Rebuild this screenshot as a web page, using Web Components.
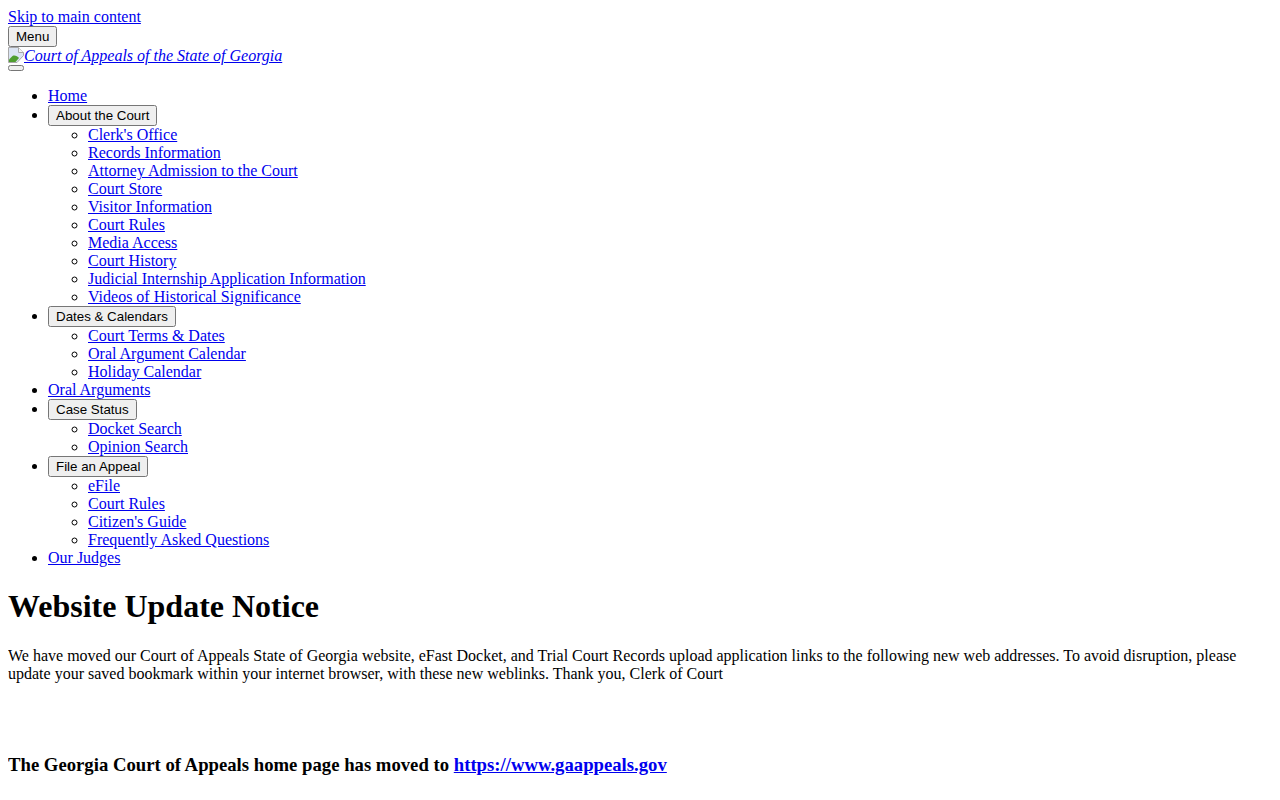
<!DOCTYPE html>
<html lang="en">
<head>
<meta charset="utf-8">
<title>Court of Appeals of the State of Georgia</title>
<style>
    body {
        font-family: "Liberation Serif", serif;
        font-size: 16px;
    }
</style>
</head>
<body>
<site-header></site-header>
<site-nav></site-nav>
<update-notice></update-notice>

<script>
const linkStyles = `
    a { color: #0000ee; }
    button {
        font-family: "Liberation Sans", sans-serif;
        font-size: 13.3333px;
    }
`;

class SiteHeader extends HTMLElement {
    constructor() {
        super();
        this.attachShadow({ mode: 'open' });
    }

    connectedCallback() {
        this.shadowRoot.innerHTML = `
            <style>
                :host { display: block; }
                ${linkStyles}
                .logo { font-style: italic; }
                .logo svg { vertical-align: -2px; }
                .toggle { display: block; }
            </style>
            <div><a href="#main">Skip to main content</a></div>
            <button>Menu</button>
            <div class="logo"><a href="#"><svg width="16" height="16" viewBox="0 0 16 16"><path d="M.5 15.5V.5h10l5 5v3L9 15.5z" fill="#dbe4f3" stroke="#a8a8a8"/><path d="M1 15v-2.5l3.5-3.5c2-1 5 0 6.500 2L7.500 15z" fill="#4f9e2f"/><path d="M10.500.5v5h5" fill="#f4f4f4" stroke="#a8a8a8"/></svg>Court of Appeals of the State of Georgia</a></div>
            <button class="toggle"></button>
        `;
    }
}

class NavItem extends HTMLElement {
    constructor() {
        super();
        this.attachShadow({ mode: 'open' });
    }

    connectedCallback() {
        const label = this.getAttribute('label');
        const href = this.getAttribute('href');
        this.shadowRoot.innerHTML = `
            <style>
                :host { display: list-item; }
                ${linkStyles}
                ul { margin: 0; padding-left: 40px; list-style-type: circle; }
            </style>
            ${href ? `<a href="${href}">${label}</a>` : `<button>${label}</button>`}
            ${href ? '' : '<ul><slot></slot></ul>'}
        `;
    }
}

class SiteNav extends HTMLElement {
    constructor() {
        super();
        this.attachShadow({ mode: 'open' });
    }

    connectedCallback() {
        const menu = [
            ['Home'],
            ['About the Court', ["Clerk's Office", 'Records Information', 'Attorney Admission to the Court', 'Court Store', 'Visitor Information', 'Court Rules', 'Media Access', 'Court History', 'Judicial Internship Application Information', 'Videos of Historical Significance']],
            ['Dates & Calendars', ['Court Terms & Dates', 'Oral Argument Calendar', 'Holiday Calendar']],
            ['Oral Arguments'],
            ['Case Status', ['Docket Search', 'Opinion Search']],
            ['File an Appeal', ['eFile', 'Court Rules', "Citizen's Guide", 'Frequently Asked Questions']],
            ['Our Judges']
        ];
        const esc = s => s.replace(/&/g, '&amp;');
        this.shadowRoot.innerHTML = `
            <style>
                :host { display: block; }
                ul { margin: 16px 0; padding-left: 40px; list-style-type: disc; }
            </style>
            <ul>
                ${menu.map(([label, kids]) => kids
                    ? `<nav-item label="${esc(label)}">${kids.map(k => `<nav-item label="${esc(k)}" href="#"></nav-item>`).join('')}</nav-item>`
                    : `<nav-item label="${esc(label)}" href="#"></nav-item>`).join('')}
            </ul>
        `;
    }
}

class UpdateNotice extends HTMLElement {
    constructor() {
        super();
        this.attachShadow({ mode: 'open' });
    }

    connectedCallback() {
        this.shadowRoot.innerHTML = `
            <style>
                :host { display: block; }
                ${linkStyles}
                h1 { font-size: 32px; margin: 21.44px 0; }
                p { margin: 16px 0; }
                h3 { font-size: 18.72px; margin: 18.72px 0; }
            </style>
            <h1>Website Update Notice</h1>
            <p>We have moved our Court of Appeals State of Georgia website, eFast Docket, and Trial Court Records upload application links to the following new web addresses. To avoid disruption, please update your saved bookmark within your internet browser, with these new weblinks. Thank you, Clerk of Court</p>
            <p>&nbsp;<br>&nbsp;</p>
            <h3>The Georgia Court of Appeals home page has moved to <a href="#">https://www.gaappeals.gov</a></h3>
        `;
    }
}

customElements.define('site-header', SiteHeader);
customElements.define('nav-item', NavItem);
customElements.define('site-nav', SiteNav);
customElements.define('update-notice', UpdateNotice);
</script>
</body>
</html>
